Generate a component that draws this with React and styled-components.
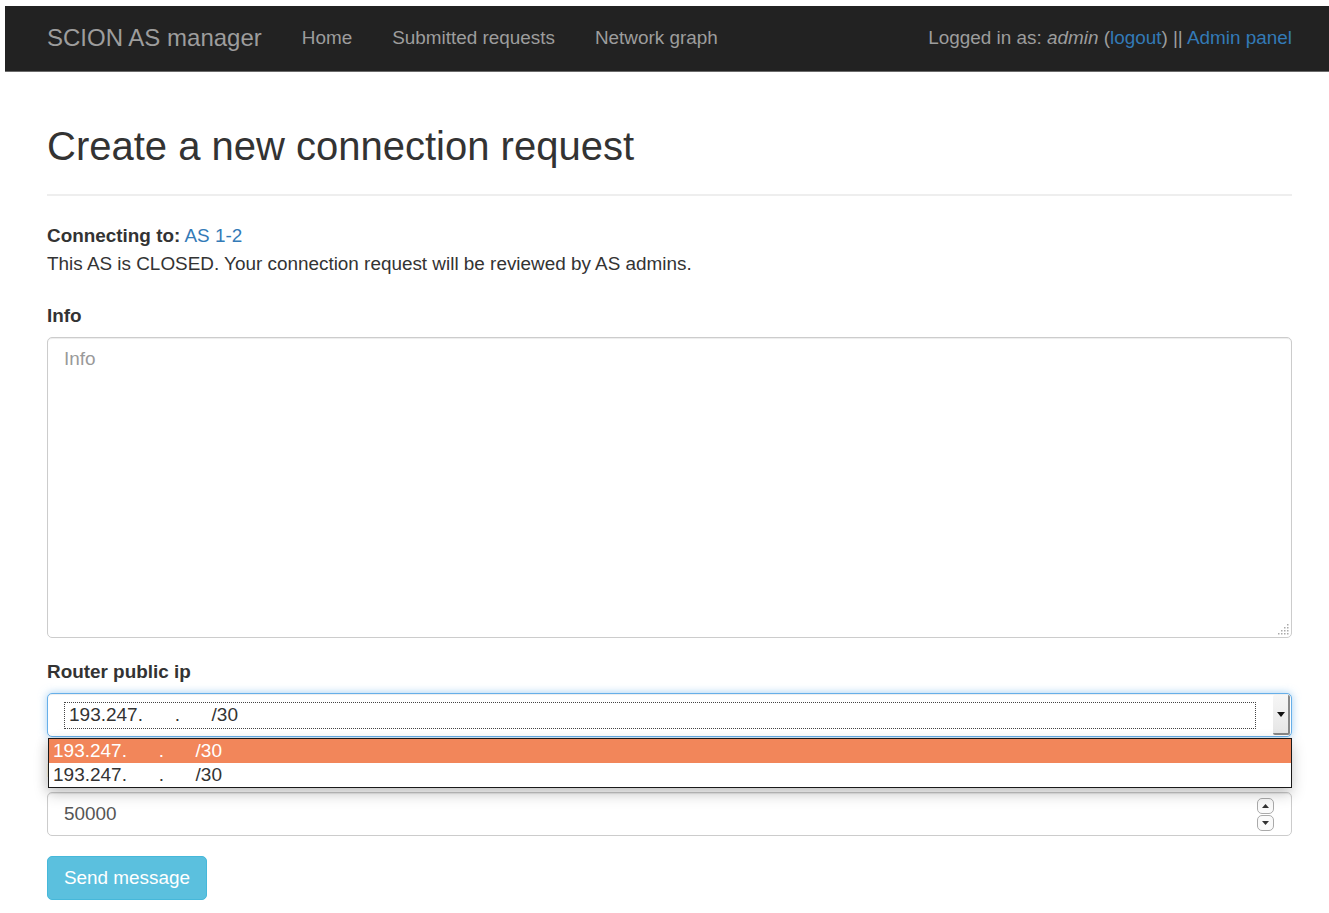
import React from 'react';
import styled, { createGlobalStyle } from 'styled-components';

const Global = createGlobalStyle`
  html, body { margin: 0; padding: 0; background: #fff; }
  body {
    font-family: "Liberation Sans", Arial, Helvetica, sans-serif;
    color: #333;
    font-size: 18.9px;
    line-height: 28px;
  }
  * { box-sizing: border-box; }
`;

const Page = styled.div`
  padding: 6px 0 0 5px;
`;

const Navbar = styled.nav`
  height: 66px;
  background: #222;
  border-bottom: 1px solid #6a6a6a;
  display: flex;
  align-items: center;
  padding: 0 37px 2px 42px;
`;

const Brand = styled.a`
  font-size: 24px;
  color: #9d9d9d;
  padding-right: 20px;
  text-decoration: none;
`;

const NavList = styled.ul`
  display: flex;
  list-style: none;
  margin: 0;
  padding: 0;
`;

const NavLink = styled.a`
  display: block;
  padding: 0 20px;
  color: #9d9d9d;
  text-decoration: none;
`;

const NavRight = styled.div`
  margin-left: auto;
  color: #9d9d9d;
  white-space: nowrap;
`;

const Link = styled.a`
  color: #337ab7;
  text-decoration: none;
`;

const Container = styled.main`
  padding: 0 37px 0 42px;
`;

const Header = styled.div`
  margin-top: 48px;
  padding-bottom: 22px;
  border-bottom: 2px solid #eee;
`;

const Title = styled.h1`
  margin: 0;
  font-size: 40px;
  line-height: 52px;
  font-weight: 400;
  color: #333;
`;

const Intro = styled.p`
  margin: 26px 0 24px;
`;

const FormGroup = styled.div`
  position: relative;
  margin-bottom: 20px;
`;

const Label = styled.label`
  display: block;
  font-weight: bold;
  margin-bottom: 7px;
`;

const TextAreaWrap = styled.div`
  position: relative;
`;

const TextArea = styled.textarea`
  display: block;
  width: 100%;
  height: 301px;
  border: 1px solid #ccc;
  border-radius: 5px;
  padding: 8px 16px;
  font-family: inherit;
  font-size: 18.9px;
  line-height: 26.4px;
  color: #555;
  resize: none;
  box-shadow: inset 0 1px 1px rgba(0, 0, 0, 0.075);
  &::placeholder { color: #999; }
`;

const Grip = styled.svg`
  position: absolute;
  right: 3px;
  bottom: 3px;
`;

const SelectBox = styled.div`
  position: relative;
  height: 44px;
  display: flex;
  align-items: center;
  padding: 0 1px 0 16px;
  border: 1px solid #66afe9;
  border-radius: 5px;
  background: #fff;
  box-shadow: inset 0 1px 1px rgba(0, 0, 0, 0.075), 0 0 8px rgba(102, 175, 233, 0.6);
`;

const FocusRing = styled.div`
  flex: 1;
  height: 27px;
  border: 1px dotted #444;
  padding-left: 4px;
  display: flex;
  align-items: center;
  font-size: 19px;
  color: #333;
  white-space: pre;
`;

const DropButton = styled.div`
  width: 17px;
  height: 40px;
  margin-left: 17px;
  background: linear-gradient(#f6f6f6, #e6e6e6);
  border-right: 2px solid #888;
  border-bottom: 2px solid #888;
  border-radius: 2px;
  display: flex;
  align-items: center;
  justify-content: center;
`;

const OptionList = styled.ul`
  position: absolute;
  top: calc(100% + 2px);
  left: 0;
  right: -1px;
  margin: 0;
  padding: 0;
  list-style: none;
  border: 1px solid #1a1a1a;
  background: #fff;
  z-index: 10;
  box-shadow: 0 6px 14px rgba(0, 0, 0, 0.2), -3px 2px 10px rgba(0, 0, 0, 0.08);
`;

const Option = styled.li`
  height: 24px;
  line-height: 24px;
  padding-left: 4px;
  font-size: 19px;
  white-space: pre;
  background: ${p => (p.$active ? '#f2865a' : '#fff')};
  color: ${p => (p.$active ? '#fff' : '#333')};
`;

const NumberField = styled.div`
  height: 44px;
  border: 1px solid #ccc;
  border-radius: 5px;
  display: flex;
  align-items: center;
  padding: 0 16px;
  color: #555;
  box-shadow: inset 0 1px 1px rgba(0, 0, 0, 0.075);
`;

const NumberValue = styled.span`
  flex: 1;
`;

const Spinner = styled.div`
  display: flex;
  flex-direction: column;
  gap: 1px;
  margin-right: 1px;
`;

const SpinBtn = styled.div`
  width: 17px;
  height: 16px;
  border: 1px solid #aaa;
  border-radius: 5px;
  background: #fafafa;
  display: flex;
  align-items: center;
  justify-content: center;
`;

const SubmitButton = styled.button`
  height: 44px;
  padding: 0 16px;
  font-family: inherit;
  font-size: 18.9px;
  color: #fff;
  background: #5bc0de;
  border: 1px solid #46b8da;
  border-radius: 5px;
  cursor: pointer;
`;

const ip = '193.247.      .      /30';

function Tri({ up }) {
  return (
    <svg width="7" height="4" viewBox="0 0 7 4">
      <path d={up ? 'M0 4 L3.5 0 L7 4 Z' : 'M0 0 L7 0 L3.5 4 Z'} fill="#333" />
    </svg>
  );
}

export default function App() {
  return (
    <Page>
      <Global />
      <Navbar>
        <Brand href="#">SCION AS manager</Brand>
        <NavList>
          <li><NavLink href="#">Home</NavLink></li>
          <li><NavLink href="#">Submitted requests</NavLink></li>
          <li><NavLink href="#">Network graph</NavLink></li>
        </NavList>
        <NavRight>
          Logged in as: <em>admin</em> (<Link href="#">logout</Link>) || <Link href="#">Admin panel</Link>
        </NavRight>
      </Navbar>
      <Container>
        <Header>
          <Title>Create a new connection request</Title>
        </Header>
        <Intro>
          <strong>Connecting to:</strong> <Link href="#">AS 1-2</Link>
          <br />
          This AS is CLOSED. Your connection request will be reviewed by AS admins.
        </Intro>
        <FormGroup>
          <Label>Info</Label>
          <TextAreaWrap>
            <TextArea placeholder="Info" />
            <Grip width="12" height="12" viewBox="0 0 12 12">
              {[[10, 1], [7, 4], [10, 4], [4, 7], [7, 7], [10, 7], [1, 10], [4, 10], [7, 10], [10, 10]].map(([x, y]) => (
                <rect key={`${x}-${y}`} x={x} y={y} width="1.5" height="1.5" fill="#aaa" />
              ))}
            </Grip>
          </TextAreaWrap>
        </FormGroup>
        <FormGroup>
          <Label>Router public ip</Label>
          <SelectBox>
            <FocusRing>{ip}</FocusRing>
            <DropButton>
              <svg width="8" height="5" viewBox="0 0 8 5">
                <path d="M0 0 L8 0 L4 5 Z" fill="#111" />
              </svg>
            </DropButton>
            <OptionList>
              <Option $active>{ip}</Option>
              <Option>{ip}</Option>
            </OptionList>
          </SelectBox>
        </FormGroup>
        <FormGroup>
          <Label>Router public port</Label>
          <NumberField>
            <NumberValue>50000</NumberValue>
            <Spinner>
              <SpinBtn><Tri up /></SpinBtn>
              <SpinBtn><Tri /></SpinBtn>
            </Spinner>
          </NumberField>
        </FormGroup>
        <SubmitButton>Send message</SubmitButton>
      </Container>
    </Page>
  );
}
